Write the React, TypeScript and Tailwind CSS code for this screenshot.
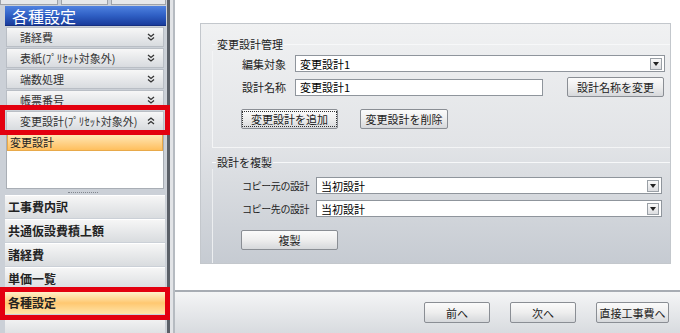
import React from "react";

const font = "font-['Noto_Sans_CJK_JP','Noto_Sans',sans-serif]";

function Chevrons({ up = false }: { up?: boolean }) {
  return (
    <svg width="8" height="8" viewBox="0 0 8 8" className={up ? "rotate-180" : ""}>
      <polyline points="1,1 4,3.5 7,1" fill="none" stroke="#333" strokeWidth="1.3" />
      <polyline points="1,4.5 4,7 7,4.5" fill="none" stroke="#333" strokeWidth="1.3" />
    </svg>
  );
}

function AccItem({ label, up = false }: { label: string; up?: boolean }) {
  return (
    <div className="shrink-0 h-[20px] ml-[6px] mr-[2px] flex items-center justify-between pl-[13px] pr-[8px] border border-[#b9bec5] bg-gradient-to-b from-[#f7f7f7] to-[#d8dbdf] text-[#333]">
      <span>{label}</span>
      <Chevrons up={up} />
    </div>
  );
}

function NavItem({ label, active = false }: { label: string; active?: boolean }) {
  return (
    <div
      className={`shrink-0 h-[23px] ml-[5px] mr-[1px] flex items-center pl-[3px] font-bold text-[12px] text-[#222] border-t border-white ${
        active
          ? "bg-gradient-to-b from-[#fff0c8] via-[#ffc870] to-[#ffe4a8]"
          : "bg-gradient-to-b from-[#f6f6f6] to-[#d9dcdf]"
      }`}
    >
      {label}
    </div>
  );
}

function DropBtn() {
  return (
    <div className="w-[12px] h-[12px] mr-[2px] border border-[#9aa0a6] bg-gradient-to-b from-[#fafafa] to-[#dcdde0] flex items-center justify-center">
      <svg width="6" height="4" viewBox="0 0 6 4">
        <polygon points="0,0 6,0 3,4" fill="#222" />
      </svg>
    </div>
  );
}

function Select({ value, className }: { value: string; className: string }) {
  return (
    <div className={`h-[17px] border border-[#8f959c] bg-white flex items-center justify-between ${className}`}>
      <span className="pl-[4px]">{value}</span>
      <DropBtn />
    </div>
  );
}

function Btn({ label, className, focus = false }: { label: string; className: string; focus?: boolean }) {
  return (
    <div
      className={`h-[20px] border border-[#8a8e94] rounded-[2px] bg-gradient-to-b from-[#fbfbfb] via-[#eeeeee] to-[#d6d8db] flex items-center justify-center text-[#222] ${className}`}
    >
      <span className={focus ? "outline outline-1 outline-dotted outline-[#333] px-[8px]" : ""}>{label}</span>
    </div>
  );
}

function Legend({ label }: { label: string }) {
  return (
    <div className="h-[14px] flex items-center text-[#222]">
      <div className="w-[4px] h-px bg-[#f7f8f9]" />
      <span className="px-[1px]">{label}</span>
      <div className="flex-1 h-px bg-[#f7f8f9]" />
    </div>
  );
}

export default function App() {
  return (
    <div className={`relative w-[680px] h-[333px] flex overflow-hidden bg-white text-[11px] leading-[14px] whitespace-nowrap ${font}`}>
      {/* sidebar */}
      <div className="w-[166px] h-full bg-[#cbd0d7] flex flex-col overflow-hidden">
        <div className="shrink-0 h-[5px] flex gap-[3px]">
          <div className="w-[58px] h-full border border-t-0 border-[#9ea3a9] bg-[#e6e8ea]" />
          <div className="w-[47px] h-full border border-t-0 border-[#9ea3a9] bg-[#e6e8ea]" />
          <div className="flex-1 h-full border border-t-0 border-[#9ea3a9] bg-[#e6e8ea]" />
        </div>
        <div className="shrink-0 h-[20px] mt-[1px] ml-[5px] flex items-center pl-[7px] bg-gradient-to-b from-[#4f82e0] via-[#2f5fc4] to-[#1a3c9c] border-b border-[#152f80] text-white text-[16px] leading-[18px]">
          各種設定
        </div>
        <div className="shrink-0 flex flex-col gap-px mt-px">
          <AccItem label="諸経費" />
          <AccItem label="表紙(ﾌﾟﾘｾｯﾄ対象外)" />
          <AccItem label="端数処理" />
          <AccItem label="帳票番号" />
          <AccItem label="変更設計(ﾌﾟﾘｾｯﾄ対象外)" up />
        </div>
        <div className="shrink-0 h-[58px] ml-[6px] mr-[2px] bg-white border border-[#a9aeb5] pt-[1px]">
          <div className="h-[18px] flex items-center pl-[2px] bg-gradient-to-b from-[#ffe9b8] to-[#ffbf5c] border border-[#e8a94a] text-[#222]">
            変更設計
          </div>
        </div>
        <div className="shrink-0 h-[6px] flex items-center justify-center">
          <div className="w-[30px] h-px border-t border-dotted border-[#80868e]" />
        </div>
        <div className="shrink-0 flex flex-col gap-px">
          <NavItem label="工事費内訳" />
          <NavItem label="共通仮設費積上額" />
          <NavItem label="諸経費" />
          <NavItem label="単価一覧" />
          <NavItem label="各種設定" active />
          <NavItem label="" />
        </div>
      </div>

      {/* splitter */}
      <div className="w-[9px] h-full flex bg-[#cfd3d9]">
        <div className="w-[1px]" />
        <div className="w-[3px] bg-[#5b6068]" />
        <div className="w-[3px] bg-[#e2e4e7]" />
        <div className="w-[2px] bg-[#b6bbc1]" />
      </div>

      {/* main */}
      <div className="flex-1 flex flex-col">
        <div className="flex-1 pt-[23px] pl-[25px] pr-[9px]">
          <div className="h-[241px] border border-[#c3c7cc] bg-gradient-to-b from-[#f0f1f2] via-[#e2e4e7] to-[#c6cbd2] flex flex-col">
            {/* group 1 */}
            <div className="ml-[11px] mt-[13px] flex flex-col">
              <Legend label="変更設計管理" />
              <div className="border-l border-b border-[#f4f5f6] pt-[4px] pb-[18px] pl-[29px] pr-[5px] flex flex-col">
                <div className="flex items-center h-[17px]">
                  <span className="w-[53px] text-[#222]">編集対象</span>
                  <Select value="変更設計1" className="flex-1" />
                </div>
                <div className="flex items-center h-[20px] mt-[5px]">
                  <span className="w-[53px] text-[#222]">設計名称</span>
                  <div className="w-[248px] h-[17px] border border-[#8f959c] bg-white flex items-center pl-[4px]">変更設計1</div>
                  <Btn label="設計名称を変更" className="w-[97px] ml-[24px]" />
                </div>
                <div className="flex items-center mt-[12px] -ml-[1px]">
                  <Btn label="変更設計を追加" className="w-[97px]" focus />
                  <Btn label="変更設計を削除" className="w-[88px] ml-[22px]" />
                </div>
              </div>
            </div>
            {/* group 2 */}
            <div className="ml-[11px] mt-[7px] flex flex-col">
              <Legend label="設計を複製" />
              <div className="border-l border-[#eceef0] pt-[8px] pl-[29px] pr-[8px] flex flex-col">
                <div className="flex items-center h-[17px]">
                  <span className="w-[74px] text-[#222] text-[10px] tracking-[-0.4px]">コピー元の設計</span>
                  <Select value="当初設計" className="flex-1" />
                </div>
                <div className="flex items-center h-[17px] mt-[6px]">
                  <span className="w-[74px] text-[#222] text-[10px] tracking-[-0.4px]">コピー先の設計</span>
                  <Select value="当初設計" className="flex-1" />
                </div>
                <div className="flex items-center mt-[13px] mb-[13px] -ml-[1px]">
                  <Btn label="複製" className="w-[97px]" />
                </div>
              </div>
            </div>
          </div>
        </div>
        <div className="h-[43px] border-t-2 border-[#a7acb3] bg-gradient-to-b from-[#f4f5f6] to-[#d8dbdf] flex items-center justify-end pr-[11px] gap-[20px]">
          <Btn label="前へ" className="w-[66px] h-[21px]" />
          <Btn label="次へ" className="w-[66px] h-[21px]" />
          <Btn label="直接工事費へ" className="w-[73px] h-[21px]" />
        </div>
      </div>

      {/* highlight frames */}
      <div className="absolute left-0 top-[105px] w-[170px] h-[30px] border-[5px] border-[#e3000f]" />
      <div className="absolute left-0 top-[287px] w-[170px] h-[33px] border-[5px] border-[#e3000f]" />
    </div>
  );
}
